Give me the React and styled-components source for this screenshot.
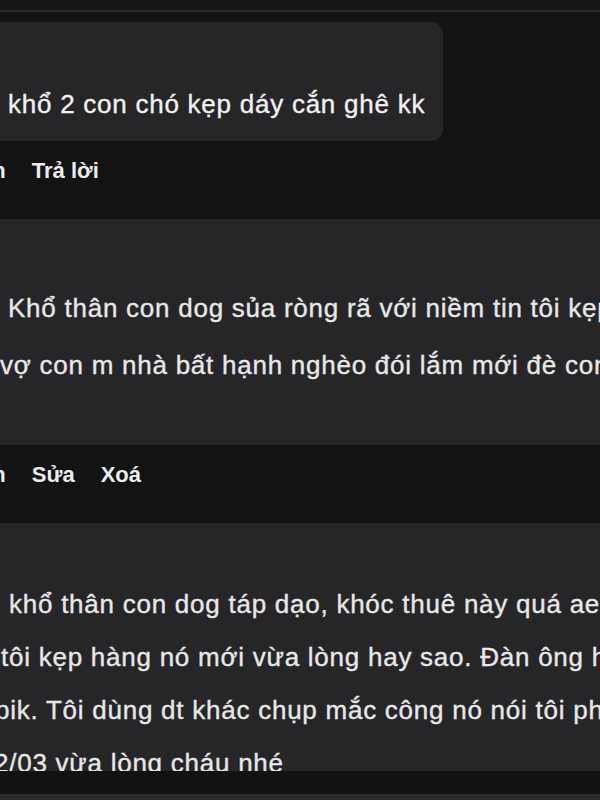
import styled, { createGlobalStyle } from "styled-components";

const GlobalStyle = createGlobalStyle`
  html, body {
    margin: 0;
    padding: 0;
    background: #131313;
    overflow: hidden;
  }
  body {
    font-family: "Liberation Sans", Arial, sans-serif;
    color: #e6e6e6;
  }
`;

const comments = [
  {
    id: 0,
    kind: "bubble",
    lines: [{ text: "khổ 2 con chó kẹp dáy cắn ghê kk", indent: 8 }],
    actions: ["Trích dẫn", "Trả lời"],
  },
  {
    id: 1,
    kind: "panel",
    height: 226,
    top: 61,
    lineHeight: 57,
    lines: [
      { text: "Khổ thân con dog sủa ròng rã với niềm tin tôi kẹp hàng", indent: 8 },
      { text: "vợ con m nhà bất hạnh nghèo đói lắm mới đè con", indent: 0 },
    ],
    actions: ["Trích dẫn", "Sửa", "Xoá"],
  },
  {
    id: 2,
    kind: "panel",
    height: 248,
    top: 55,
    lineHeight: 53,
    lines: [
      { text: "khổ thân con dog táp dạo, khóc thuê này quá ae", indent: 9 },
      { text: "tôi kẹp hàng nó mới vừa lòng hay sao. Đàn ông hay", indent: 1 },
      { text: "pik. Tôi dùng dt khác chụp mắc công nó nói tôi phải", indent: -5 },
      { text: "2/03 vừa lòng cháu nhé", indent: -6 },
    ],
  },
];

const App = () => {
  return (
    <>
      <GlobalStyle />
      <Page>
        <TopBar />
        <TopRule />
        <Thread>
          {comments.map((c) => (
            <Comment key={c.id}>
              {c.kind === "bubble" ? (
                <BubbleRow>
                  <Bubble>
                    {c.lines.map((l, i) => (
                      <Line key={i} $indent={l.indent} $bright>
                        {l.text}
                      </Line>
                    ))}
                  </Bubble>
                </BubbleRow>
              ) : (
                <Panel $h={c.height} $top={c.top} $lh={c.lineHeight}>
                  {c.lines.map((l, i) => (
                    <Line key={i} $indent={l.indent}>
                      {l.text}
                    </Line>
                  ))}
                </Panel>
              )}
              {c.actions && (
                <Actions>
                  {c.actions.map((a) => (
                    <ActionLink key={a}>{a}</ActionLink>
                  ))}
                </Actions>
              )}
            </Comment>
          ))}
        </Thread>
        <BottomBand />
        <BottomRule />
      </Page>
    </>
  );
};

const Page = styled.div`
  width: 600px;
  height: 800px;
  overflow: hidden;
  display: flex;
  flex-direction: column;
  background: #131313;
`;

const TopBar = styled.div`
  height: 10px;
  background: #161616;
`;

const TopRule = styled.div`
  height: 2px;
  background: #2b2b2c;
`;

const Thread = styled.div`
  padding-top: 10px;
  display: flex;
  flex-direction: column;
`;

const Comment = styled.div`
  display: flex;
  flex-direction: column;
`;

const BubbleRow = styled.div`
  display: flex;
  margin-left: -24px;
`;

const Bubble = styled.div`
  width: 467px;
  height: 119px;
  box-sizing: border-box;
  padding: 56px 0 0 24px;
  line-height: 52px;
  background: #262628;
  border-radius: 12px;
  overflow: hidden;
`;

const Panel = styled.div`
  height: ${(p) => p.$h}px;
  box-sizing: border-box;
  padding-top: ${(p) => p.$top}px;
  line-height: ${(p) => p.$lh}px;
  background: #262628;
  overflow: hidden;
`;

const Line = styled.div`
  font-size: 26px;
  line-height: inherit;
  letter-spacing: 0.75px;
  white-space: nowrap;
  text-indent: ${(p) => p.$indent}px;
  color: ${(p) => (p.$bright ? "#f1f1f1" : "#e8e8e8")};
  -webkit-text-stroke: 0.35px currentColor;
`;

const Actions = styled.div`
  height: 78px;
  box-sizing: border-box;
  padding-top: 18px;
  margin-left: -92px;
  display: flex;
  gap: 26px;
  align-items: flex-start;
`;

const ActionLink = styled.span`
  font-size: 22px;
  line-height: 24px;
  font-weight: 700;
  color: #ececec;
  white-space: nowrap;
  cursor: pointer;
`;

const BottomBand = styled.div`
  height: 23px;
  background: #121212;
`;

const BottomRule = styled.div`
  height: 6px;
  background: #2c2c30;
`;

export default App;
